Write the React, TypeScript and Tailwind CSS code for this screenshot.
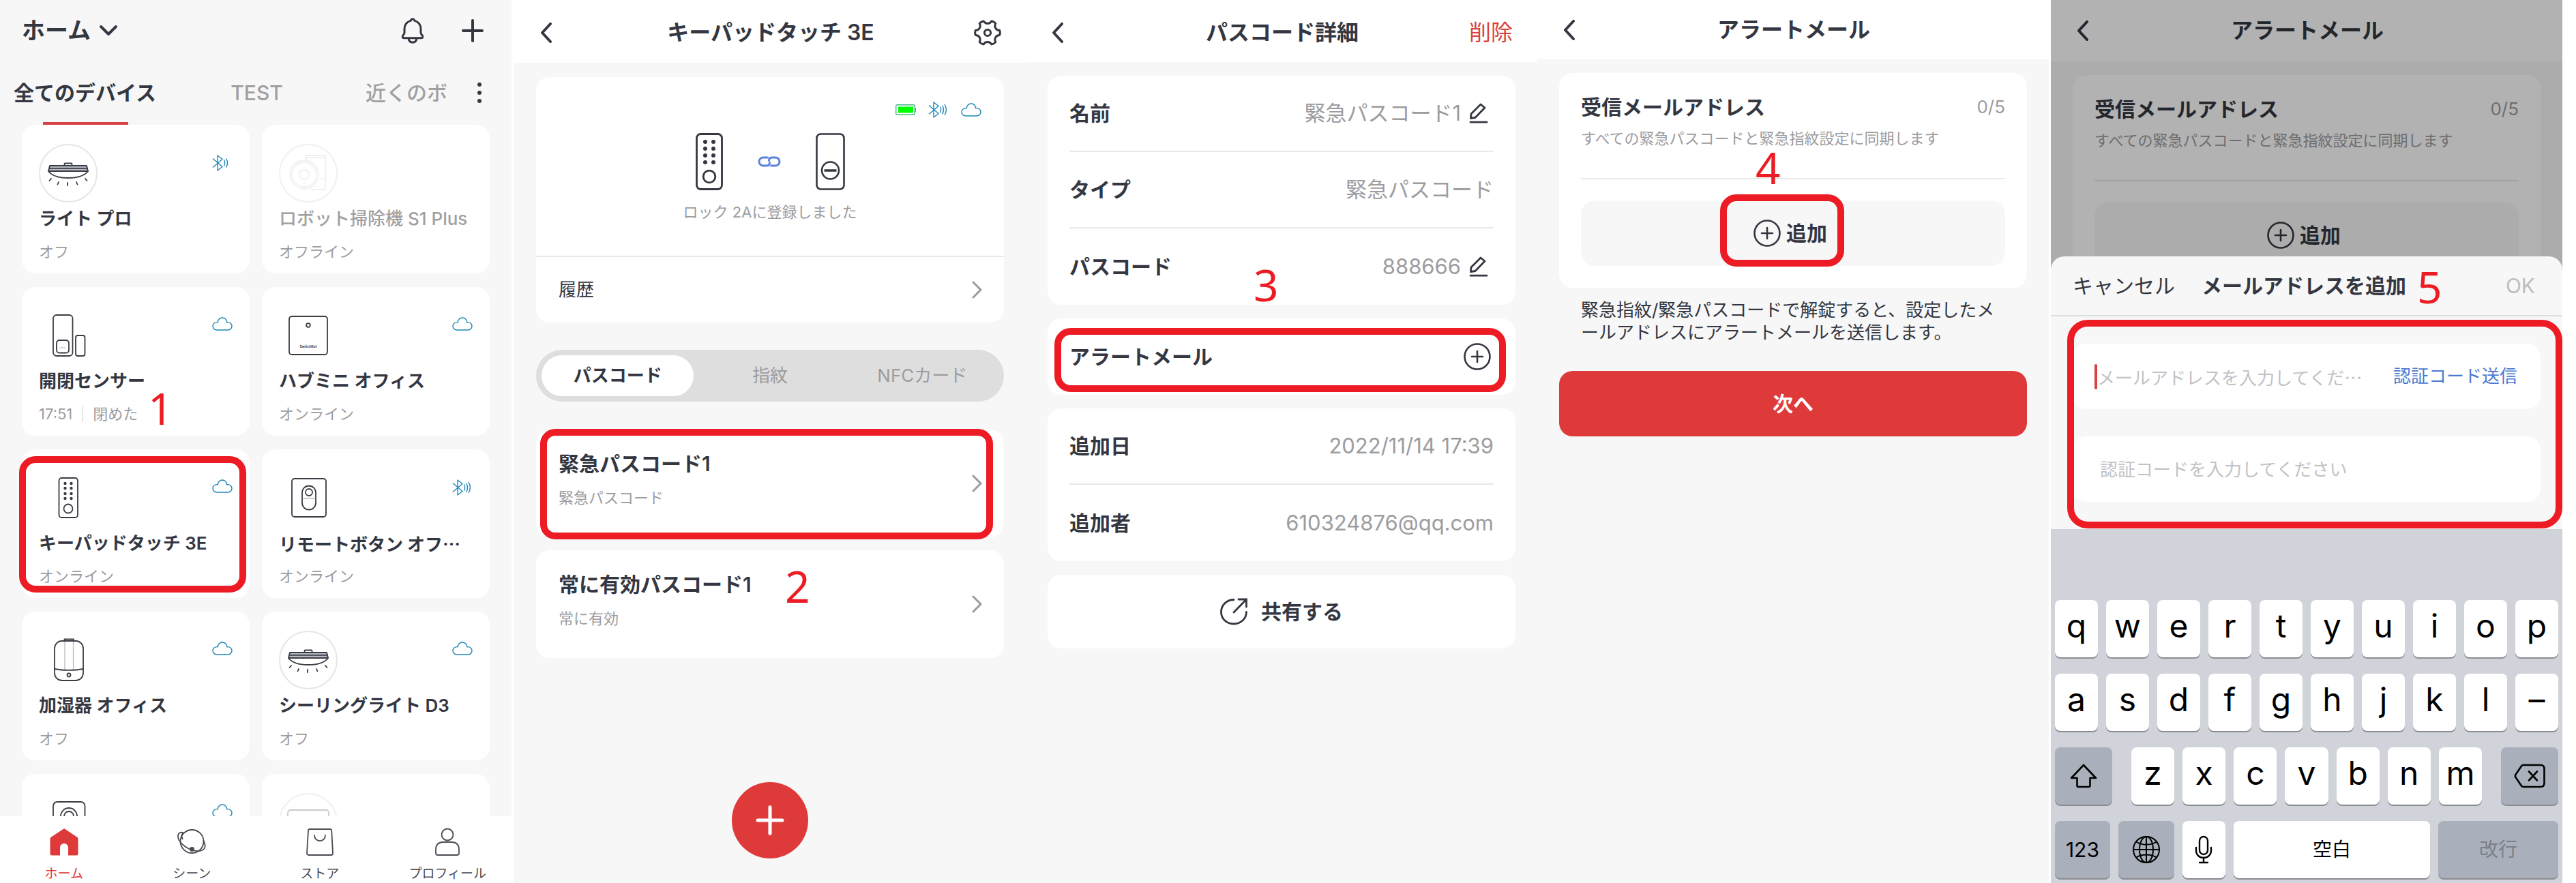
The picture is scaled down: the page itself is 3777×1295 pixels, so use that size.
import type { ReactNode } from "react"

type Signal = "bt" | "cloud" | "none"

interface Device {
  name: string
  status: string
  time?: string
  signal: Signal
  waves?: number
  icon: ReactNode
  offline?: boolean
  marked?: boolean
}

const keyRows = ["qwertyuiop", "asdfghjkl–", "zxcvbnm"]

/* ---------- small icons ---------- */

const BackIcon = () => (
  <svg viewBox="0 0 18 30" className="w-[18px] h-[30px]" fill="none" stroke="currentColor" strokeWidth="4" strokeLinecap="round" strokeLinejoin="round">
    <path d="M15 2 L3 15 L15 28" />
  </svg>
)

const NextIcon = () => (
  <svg viewBox="0 0 16 28" className="w-4 h-7 shrink-0" fill="none" stroke="#9b9b9e" strokeWidth="3" strokeLinecap="round" strokeLinejoin="round">
    <path d="M3 3 L14 14 L3 25" />
  </svg>
)

const BellIcon = () => (
  <svg viewBox="0 0 34 38" className="w-[34px] h-[38px]" fill="none" stroke="currentColor" strokeWidth="3" strokeLinejoin="round">
    <path d="M17 2 C15.5 2 14.5 3 14.3 4.4 C8.8 5.6 5 10.2 5 16 V22 C5 24.6 2.2 25.4 2.2 27.8 C2.2 29.2 3 29.8 4.5 29.8 H29.5 C31 29.8 31.8 29.2 31.8 27.8 C31.8 25.4 29 24.6 29 22 V16 C29 10.2 25.2 5.6 19.7 4.4 C19.5 3 18.5 2 17 2 Z" />
    <path d="M11 30 C11.5 34 14 36.2 17 36.2 C20 36.2 22.5 34 23 30" />
  </svg>
)

const PlusIcon = ({ className }: { className: string }) => (
  <svg viewBox="0 0 34 36" className={className} fill="none" stroke="currentColor" strokeWidth="4" strokeLinecap="round">
    <path d="M3 18 H31 M17 3 V33" />
  </svg>
)

const AddCircleIcon = () => (
  <svg viewBox="0 0 40 40" className="w-10 h-10 shrink-0" fill="none" stroke="currentColor" strokeWidth="2.6" strokeLinecap="round">
    <circle cx="20" cy="20" r="18.5" />
    <path d="M12 20 H28 M20 12 V28" />
  </svg>
)

function gearPath() {
  const point = (r: number, deg: number) => {
    const a = (deg * Math.PI) / 180
    return `${(20 + r * Math.cos(a)).toFixed(2)} ${(20 + r * Math.sin(a)).toFixed(2)}`
  }
  let d = `M${point(18, -11)}`
  for (let t = 0; t < 360; t += 60) {
    d += ` Q${point(19, t)} ${point(18, t + 11)}`
    d += ` C${point(13, t + 16)} ${point(12.5, t + 44)} ${point(18, t + 49)}`
  }
  return d + " Z"
}

const GearIcon = () => (
  <svg viewBox="0 0 40 40" className="w-10 h-10" fill="none" stroke="currentColor" strokeWidth="3" strokeLinejoin="round">
    <path d={gearPath()} />
    <circle cx="20" cy="20" r="4.6" />
  </svg>
)

const CloudIcon = () => (
  <svg viewBox="0 0 30 20" className="w-[30px] h-5" fill="none" stroke="#1d86b8" strokeWidth="1.4">
    <path d="M7 19 H23 C26.5 19 29 16.5 29 13.3 C29 10 26.3 7.6 23 7.6 C22.6 7.6 22.2 7.6 21.8 7.7 C21.6 4 18.8 1 15 1 C11.2 1 8.4 4 8.2 7.7 C7.8 7.6 7.4 7.6 7 7.6 C3.7 7.6 1 10 1 13.3 C1 16.5 3.5 19 7 19 Z" />
  </svg>
)

const BluetoothIcon = ({ waves = 3 }: { waves?: number }) => (
  <svg viewBox="0 0 30 24" className="w-[30px] h-6" fill="none" stroke="#1d86b8" strokeWidth="1.4" strokeLinejoin="round">
    <path d="M1 5.5 L15 17.5 L8 23 V1 L15 6.5 L1 18.5" />
    <path d="M17.5 7.5 C19 10.5 19 13.5 17.5 16.5 M20.5 5.5 C23 9.5 23 14.5 20.5 18.5" />
    {waves > 2 && <path d="M24 4 C27 9 27 15 24 20" />}
  </svg>
)

const BatteryIcon = () => (
  <svg viewBox="0 0 30 16" className="w-[30px] h-4" fill="none">
    <rect x="0.7" y="0.7" width="27.6" height="14.6" rx="2" stroke="#3fb883" strokeWidth="1.4" />
    <rect x="4" y="3.5" width="22" height="9" fill="#00ff00" />
    <rect x="28.6" y="5" width="1.4" height="6" fill="#3fb883" />
  </svg>
)

const LinkIcon = () => (
  <svg viewBox="0 0 34 16" className="w-[34px] h-4" fill="none" stroke="#5a82dc" strokeWidth="3" strokeLinecap="round">
    <path d="M14.5 2 H8 A6 6 0 0 0 8 14 H13 C16 14 17.5 12 17.5 9.5" />
    <path d="M19.5 14 H26 A6 6 0 0 0 26 2 H21 C18 2 16.5 4 16.5 6.5" />
  </svg>
)

const EditIcon = () => (
  <svg viewBox="0 0 28 30" className="w-7 h-[30px]" fill="none" stroke="currentColor" strokeWidth="2.8" strokeLinecap="round" strokeLinejoin="round">
    <path d="M17 2 L23 7 L9 21.5 L2.5 22.5 L3 16 Z M2 28.2 H26" />
  </svg>
)

const ShareIcon = () => (
  <svg viewBox="0 0 40 40" className="w-10 h-10" fill="none" stroke="currentColor" strokeWidth="2.8" strokeLinecap="round">
    <path d="M20 2.5 C9.5 2.5 1.5 10.4 1.5 20.5 C1.5 30.5 9.5 38 20 38 C30 38 38.5 30.5 38.5 20.5" />
    <path d="M27 2 H38.5 V13 M38 2.5 L20 21" />
  </svg>
)

/* ---------- device drawings, all on an 86px square ---------- */

const Drawing = ({ children, faint }: { children: ReactNode; faint?: boolean }) => (
  <svg viewBox="0 0 86 86" className="w-[86px] h-[86px]" fill="none" stroke={faint ? "#f0f0f1" : "#3a3c44"} strokeWidth="1.8" strokeLinecap="round" strokeLinejoin="round">
    {children}
  </svg>
)

const LightIcon = () => (
  <Drawing>
    <circle cx="43" cy="43" r="42" stroke="#e6e6e8" strokeWidth="2" />
    <path d="M37.5 32 V29.5 Q37.5 28.5 38.5 28.5 H47.5 Q48.5 28.5 48.5 29.5 V32" />
    <path d="M16 32 H70 L72 40 H14 Z" fill="#b9bac4" />
    <path d="M15 35.8 H71" />
    <path d="M14 40 C19 47 31 50 43 50 C55 50 67 47 72 40" />
    <path d="M18 51 L15.5 54 M29 56 L27.5 59.5 M42 57 V61 M55 56 L56.5 59.5 M68 51 L70.5 54" />
  </Drawing>
)

const RobotIcon = () => (
  <Drawing faint>
    <circle cx="43" cy="43" r="42" strokeWidth="2" />
    <path d="M40 23 V17 H68 V67 H48 M42 20 H68 M62 51 H68" />
    <circle cx="37" cy="45" r="21" />
    <circle cx="37" cy="45" r="18" />
    <circle cx="37" cy="45" r="7" />
    <path d="M37 57 V58 M37 61 V62" />
  </Drawing>
)

const SensorIcon = () => (
  <Drawing>
    <rect x="21" y="13" width="28.5" height="60" rx="5" />
    <rect x="26" y="50" width="18" height="18.5" rx="4" />
    <path d="M31 61 H39" stroke="#aaabb0" strokeWidth="1" />
    <rect x="54" y="43" width="13.5" height="30" rx="3" />
  </Drawing>
)

const HubIcon = () => (
  <Drawing>
    <rect x="15" y="15" width="56" height="56" rx="4" />
    <circle cx="43" cy="28" r="2.8" />
    <text x="43" y="61" textAnchor="middle" fontSize="5" fontWeight="700" fill="#3a3c44" stroke="none">SwitchBot</text>
  </Drawing>
)

const KeypadDrawing = () => (
  <Drawing>
    <rect x="29.5" y="14" width="27.5" height="58" rx="4" />
    {[22, 29, 37, 44].map((y) => (
      <g key={y} fill="#3a3c44" stroke="none">
        <circle cx="38.5" cy={y} r="2.2" />
        <circle cx="47.5" cy={y} r="2.2" />
      </g>
    ))}
    <circle cx="43" cy="59" r="6.5" />
  </Drawing>
)

const RemoteIcon = () => (
  <Drawing>
    <rect x="19" y="15" width="50" height="56" rx="4" />
    <rect x="34" y="25.5" width="20" height="35" rx="10" />
    <circle cx="44" cy="35" r="5" />
    <path d="M35 44 H53" stroke="#b9bac0" strokeWidth="1.3" />
  </Drawing>
)

const HumidifierIcon = () => (
  <Drawing>
    <path d="M38 16 V57 M50.5 16 V57" stroke="#b9bac0" strokeWidth="1.3" />
    <rect x="23" y="15" width="42" height="58" rx="11" />
    <path d="M37.5 15 V12.5 H51 V15" />
    <path d="M23 56 C35 58.5 53 58.5 65 56" />
    <circle cx="44" cy="65" r="2.5" />
  </Drawing>
)

const MeterIcon = () => (
  <Drawing>
    <rect x="21" y="13" width="46.5" height="60" rx="6" />
    <circle cx="44" cy="34" r="12" />
    <circle cx="44" cy="34" r="7" />
  </Drawing>
)

const FaintIcon = () => (
  <Drawing faint>
    <circle cx="43" cy="43" r="42" strokeWidth="2" />
    <rect x="13" y="25" width="60" height="40" rx="4" stroke="#c9cacd" />
  </Drawing>
)

const devices: Device[] = [
  { name: "ライト プロ", status: "オフ", signal: "bt", waves: 2, icon: <LightIcon /> },
  { name: "ロボット掃除機 S1 Plus", status: "オフライン", signal: "none", icon: <RobotIcon />, offline: true },
  { name: "開閉センサー", status: "閉めた", time: "17:51", signal: "cloud", icon: <SensorIcon /> },
  { name: "ハブミニ オフィス", status: "オンライン", signal: "cloud", icon: <HubIcon /> },
  { name: "キーパッドタッチ 3E", status: "オンライン", signal: "cloud", icon: <KeypadDrawing />, marked: true },
  { name: "リモートボタン オフ…", status: "オンライン", signal: "bt", icon: <RemoteIcon /> },
  { name: "加湿器 オフィス", status: "オフ", signal: "cloud", icon: <HumidifierIcon /> },
  { name: "シーリングライト D3", status: "オフ", signal: "cloud", icon: <LightIcon /> },
  { name: "", status: "", signal: "cloud", icon: <MeterIcon /> },
  { name: "", status: "", signal: "none", icon: <FaintIcon /> },
]

/* ---------- shared pieces ---------- */

// red frame and step number drawn over a screen
const Frame = ({ className }: { className: string }) => (
  <div className={`absolute border-[10px] border-[#ed1c24] pointer-events-none ${className}`} />
)

const Step = ({ n, className }: { n: number; className: string }) => (
  <span className={`absolute font-['Noto_Sans'] text-[64px] leading-[48px] text-[#ed1c24] ${className}`}>{n}</span>
)

const Screen = ({ children, className = "" }: { children: ReactNode; className?: string }) => (
  <section className={`relative flex-1 min-w-0 flex flex-col overflow-hidden bg-[#f7f7f7] ${className}`}>{children}</section>
)

function TopBar({ title, action, className }: { title: string; action?: ReactNode; className: string }) {
  return (
    <header className={`grid grid-cols-[1fr_auto_1fr] items-center bg-white pl-[38px] pr-9 shrink-0 ${className}`}>
      <button aria-label="戻る" className="justify-self-start"><BackIcon /></button>
      <h1 className="text-[32px] leading-10 font-semibold">{title}</h1>
      <div className="justify-self-end flex">{action}</div>
    </header>
  )
}

const DeviceCard = ({ device }: { device: Device }) => (
  <article className="relative bg-white rounded-[20px] h-[218px] pl-[25px] pt-7">
    <div className="flex justify-between items-start pr-[25px]">
      {device.icon}
      <span className="w-[30px] pt-4">
        {device.signal === "bt" && <BluetoothIcon waves={device.waves} />}
        {device.signal === "cloud" && <CloudIcon />}
      </span>
    </div>
    <h2
      className={`mt-2 text-[26px] leading-8 whitespace-nowrap ${device.offline ? "font-medium text-[#a0a0a2]" : "font-semibold"} ${
        device.name.endsWith("…") ? "font-['Noto_Sans_CJK_JP',sans-serif]" : ""
      }`}
    >
      {device.name}
    </h2>
    <p className="mt-4 text-[22px] leading-8 text-[#9c9c9f] flex items-center">
      {device.time && <span className="pr-[14px] mr-[14px] border-r-2 border-[#e6e6e8] leading-6">{device.time}</span>}
      {device.status}
    </p>
    {device.marked && <Frame className="-left-1 top-[10px] right-[5px] bottom-2 rounded-3xl" />}
  </article>
)

/* ---------- screens ---------- */

function HomeScreen() {
  return (
    <Screen>
      <header className="flex items-center h-[89px] shrink-0 pl-8 pr-10">
        <button className="flex items-center gap-3 text-[34px] leading-10 font-semibold">
          ホーム
          <svg viewBox="0 0 28 18" className="w-7 h-[18px]" fill="none" stroke="currentColor" strokeWidth="4" strokeLinecap="round" strokeLinejoin="round">
            <path d="M3 3 L14 14 L25 3" />
          </svg>
        </button>
        <button aria-label="通知" className="ml-auto"><BellIcon /></button>
        <button aria-label="追加" className="ml-[54px]"><PlusIcon className="w-[34px] h-9" /></button>
      </header>

      <nav className="flex items-center h-[94px] shrink-0 pl-5 pr-11 text-[30px] leading-10 text-[#a0a0a2]">
        <button className="relative h-full font-semibold text-[#343741]">
          全てのデバイス
          <span className="absolute left-[43px] bottom-0 w-[125px] h-1 bg-[#d94043]" />
        </button>
        <button className="mx-auto pr-3 font-medium">TEST</button>
        <button className="mr-11 font-medium">近くのボ</button>
        <button aria-label="メニュー" className="flex flex-col gap-[6px]">
          <i className="size-[6px] rounded-full bg-[#343741]" />
          <i className="size-[6px] rounded-full bg-[#343741]" />
          <i className="size-[6px] rounded-full bg-[#343741]" />
        </button>
      </nav>

      <main className="flex-1 min-h-0 overflow-hidden">
        <div className="grid grid-cols-2 gap-x-[18px] gap-y-5 px-8">
          {devices.map((d, i) => <DeviceCard key={i} device={d} />)}
        </div>
      </main>

      <nav className="grid grid-cols-4 h-[98px] shrink-0 bg-white text-[19px] leading-6 pt-[17px]">
        <a href="#home" className="flex flex-col items-center gap-[14px] text-[#df3a3a]">
          <svg viewBox="0 0 42 42" className="size-[42px]" fill="currentColor">
            <path d="M21 1 L40.5 14 Q41.5 15 41.5 16.5 V38 Q41.5 40.5 39 40.5 H27 V29 A6 6 0 0 0 15 29 V40.5 H3 Q0.5 40.5 0.5 38 V16.5 Q0.5 15 1.5 14 Z" />
          </svg>
          ホーム
        </a>
        <a href="#scene" className="flex flex-col items-center gap-[14px] text-[#4a4c54]">
          <svg viewBox="0 0 42 42" className="size-[42px]" fill="none" stroke="currentColor" strokeWidth="1.8">
            <circle cx="21.5" cy="20" r="17" />
            <path d="M9 7 C1 5 -1 12 3 19 C9 28 22 35 32 34 C41 33 43 27 38 18" />
            <path d="M9 7 C6 9 6 13 8 17" />
            <circle cx="21.5" cy="31.5" r="2.5" fill="currentColor" />
          </svg>
          シーン
        </a>
        <a href="#store" className="flex flex-col items-center gap-[14px] text-[#4a4c54]">
          <svg viewBox="0 0 42 42" className="size-[42px]" fill="none" stroke="currentColor" strokeWidth="1.8" strokeLinejoin="round" strokeLinecap="round">
            <path d="M6 2 H36 Q38 2 38.2 4 L40 37 Q40 40 37.5 40 H4.5 Q2 40 2 37 L4 4 Q4.2 2 6 2 Z" />
            <path d="M13 11 C13 22 29 22 29 11" />
          </svg>
          ストア
        </a>
        <a href="#profile" className="flex flex-col items-center gap-[14px] text-[#4a4c54]">
          <svg viewBox="0 0 42 42" className="size-[42px]" fill="none" stroke="currentColor" strokeWidth="1.8" strokeLinejoin="round">
            <circle cx="21" cy="10" r="8.5" />
            <path d="M4 37 V32 C4 25 8 21 15 21 H27 C34 21 38 25 38 32 V37 Q38 40 35 40 H7 Q4 40 4 37 Z" />
          </svg>
          プロフィール
        </a>
      </nav>

      <Step n={1} className="left-[217px] top-[575px]" />
    </Screen>
  )
}

const PasscodeItem = ({ title, kind, children }: { title: string; kind: string; children?: ReactNode }) => (
  <article className="relative flex items-center justify-between bg-white rounded-[20px] h-[158px] pl-[33px] pr-8">
    <div className="pb-3">
      <h2 className="text-[30px] leading-10 font-semibold">{title}</h2>
      <p className="mt-[14px] text-[22px] leading-8 text-[#9c9c9f]">{kind}</p>
    </div>
    <NextIcon />
    {children}
  </article>
)

function KeypadScreen() {
  return (
    <Screen className="ml-1">
      <TopBar title="キーパッドタッチ 3E" className="h-[92px] pt-1" action={<button aria-label="設定"><GearIcon /></button>} />
      <main className="flex-1 px-8 pt-[21px]">
        <div className="bg-white rounded-[20px]">
          <div className="h-[264px] border-b-2 border-[#e9e9ea] pt-9">
            <div className="flex justify-end items-center gap-[18px] pr-[33px] h-6">
              <BatteryIcon />
              <BluetoothIcon />
              <CloudIcon />
            </div>
            <div className="flex justify-center items-center mt-[22px]">
              <svg viewBox="0 0 40 84" className="w-10 h-[84px]" fill="none" stroke="currentColor" strokeWidth="2.8">
                <rect x="1.5" y="1.5" width="37" height="81" rx="6" />
                {[13, 23, 33, 43].map((y) => (
                  <g key={y} fill="currentColor" stroke="none">
                    <circle cx="14" cy={y} r="3" />
                    <circle cx="26" cy={y} r="3" />
                  </g>
                ))}
                <circle cx="20" cy="64" r="8.8" />
              </svg>
              <span className="mx-[51px]"><LinkIcon /></span>
              <svg viewBox="0 0 43 84" className="w-[43px] h-[84px]" fill="none" stroke="currentColor" strokeWidth="2.6">
                <rect x="1.5" y="1.5" width="40" height="81" rx="6" />
                <circle cx="21.5" cy="55" r="12.5" />
                <path d="M12.5 55 H30.5" strokeWidth="3.5" />
              </svg>
            </div>
            <p className="mt-4 text-center text-[22px] leading-8 text-[#9c9c9f]">ロック 2Aに登録しました</p>
          </div>
          <button className="flex w-full items-center justify-between h-24 pl-[33px] pr-8 text-[26px] leading-8">
            履歴
            <NextIcon />
          </button>
        </div>

        <div className="grid grid-cols-3 mt-10 p-2 h-[76px] rounded-full bg-[#dedede] text-[26px] leading-8 text-[#9c9c9f]">
          <button className="rounded-full bg-white text-[#343741] font-semibold">パスコード</button>
          <button>指紋</button>
          <button>NFCカード</button>
        </div>

        <div className="mt-[41px] flex flex-col gap-[19px]">
          <PasscodeItem title="緊急パスコード1" kind="緊急パスコード">
            <Frame className="left-[6px] right-4 -top-px -bottom-[3px] rounded-[22px]" />
          </PasscodeItem>
          <PasscodeItem title="常に有効パスコード1" kind="常に有効" />
        </div>
      </main>

      <div className="absolute inset-x-0 bottom-9 flex justify-center">
        <button aria-label="追加" className="flex size-28 items-center justify-center rounded-full bg-[#df3a3a] text-white">
          <PlusIcon className="w-[44px] h-[46px]" />
        </button>
      </div>
      <Step n={2} className="left-[397px] top-[836px]" />
    </Screen>
  )
}

const DetailRow = ({ label, value, edit }: { label: string; value: string; edit?: boolean }) => (
  <div className="flex items-center justify-between h-28 text-[30px] leading-10 border-b-2 border-[#e9e9ea] last:border-0">
    <dt className="font-semibold">{label}</dt>
    <dd className="flex items-center text-[31px] text-[#9c9c9f]">
      {value}
      {edit && <button aria-label={`${label}を編集`} className="ml-3 mr-2 text-[#343741]"><EditIcon /></button>}
    </dd>
  </div>
)

function DetailScreen() {
  return (
    <Screen>
      <TopBar title="パスコード詳細" className="h-[91px] pt-1" action={<button className="text-[32px] leading-10 text-[#d9413f]">削除</button>} />
      <main className="flex flex-col gap-5 px-8 pt-5">
        <dl className="bg-white rounded-[20px] px-8">
          <DetailRow label="名前" value="緊急パスコード1" edit />
          <DetailRow label="タイプ" value="緊急パスコード" />
          <DetailRow label="パスコード" value="888666" edit />
        </dl>
        <button className="relative flex items-center justify-between h-28 bg-white rounded-[20px] pl-8 pr-9 text-[30px] leading-10 font-semibold">
          アラートメール
          <AddCircleIcon />
          <Frame className="left-[10px] right-[14px] top-[14px] bottom-1 rounded-3xl" />
        </button>
        <dl className="bg-white rounded-[20px] px-8">
          <DetailRow label="追加日" value="2022/11/14 17:39" />
          <DetailRow label="追加者" value="610324876@qq.com" />
        </dl>
        <button className="flex items-center justify-center gap-5 h-[108px] bg-white rounded-[20px] text-[30px] leading-10 font-semibold">
          <ShareIcon />
          共有する
        </button>
      </main>
      <Step n={3} className="left-[334px] top-[394px]" />
    </Screen>
  )
}

const MailCard = ({ children }: { children?: ReactNode }) => (
  <div className="bg-white rounded-[20px] px-8 pt-[30px] pb-8">
    <div className="flex justify-between items-center">
      <h2 className="text-[30px] leading-10 font-semibold">受信メールアドレス</h2>
      <span className="text-[26px] leading-8 text-[#9c9c9f]">0/5</span>
    </div>
    <p className="mt-[10px] pb-[42px] border-b-2 border-[#e9e9ea] text-[22px] leading-8 text-[#9c9c9f]">すべての緊急パスコードと緊急指紋設定に同期します</p>
    <button className="relative flex w-full items-center justify-center gap-2 h-24 mt-[31px] pr-2 bg-[#f7f7f7] rounded-[20px] text-[30px] leading-10 font-semibold">
      <AddCircleIcon />
      追加
      {children}
    </button>
  </div>
)

function MailScreen() {
  return (
    <Screen>
      <TopBar title="アラートメール" className="h-[87px]" />
      <main className="px-8 pt-5">
        <MailCard>
          <Frame className="left-1/2 -ml-[107px] w-[182px] -top-[9px] h-[106px] rounded-3xl" />
        </MailCard>
        <p className="mt-4 px-8 text-[26px] leading-[33px] whitespace-nowrap">
          緊急指紋/緊急パスコードで解錠すると、設定したメ
          <br />
          ールアドレスにアラートメールを送信します。
        </p>
        <button className="w-full h-24 mt-10 rounded-[20px] bg-[#df3a3a] text-white text-[30px] leading-10 font-semibold">次へ</button>
      </main>
      <Step n={4} className="left-[320px] top-[222px]" />
    </Screen>
  )
}

const Key = ({ children, className = "bg-white flex-1", label }: { children: ReactNode; className?: string; label?: string }) => (
  <button aria-label={label} className={`flex items-center justify-center min-w-0 h-[84px] rounded-lg shadow-[0_2px_0_#8a8c91] ${className}`}>
    {children}
  </button>
)

const letters = (row: string) =>
  row.split("").map((c) => (
    <Key key={c}>
      <span className="pb-2 text-[48px] leading-[56px]">{c}</span>
    </Key>
  ))

function Keyboard() {
  return (
    <div className="flex flex-1 flex-col gap-6 bg-[#d0d3d9] px-[6px] pt-[104px] text-black">
      <div className="flex gap-3">{letters(keyRows[0])}</div>
      <div className="flex gap-3">{letters(keyRows[1])}</div>
      <div className="flex justify-between">
        <Key label="シフト" className="bg-[#a9b0bb] w-[84px]">
          <svg viewBox="0 0 40 36" className="w-10 h-9" fill="none" stroke="currentColor" strokeWidth="2.6" strokeLinejoin="round">
            <path d="M20 2 L38 21 H29.5 V32 Q29.5 34 27.5 34 H12.5 Q10.5 34 10.5 32 V21 H2 Z" />
          </svg>
        </Key>
        <div className="flex gap-3 w-[514px]">{letters(keyRows[2])}</div>
        <Key label="削除" className="bg-[#a9b0bb] w-[84px]">
          <svg viewBox="0 0 46 36" className="w-[46px] h-9" fill="none" stroke="currentColor" strokeWidth="2.6" strokeLinejoin="round" strokeLinecap="round">
            <path d="M14 2 H39 Q44.5 2 44.5 7.5 V28.5 Q44.5 34 39 34 H14 Q12 34 11 32.5 L2.5 20 Q1 18 2.5 16 L11 3.5 Q12 2 14 2 Z" />
            <path d="M22 11.5 L34 24.5 M34 11.5 L22 24.5" />
          </svg>
        </Key>
      </div>
      <div className="flex gap-3 text-[28px] leading-8">
        <Key className="bg-[#a9b0bb] flex-[81] text-[30px]">123</Key>
        <Key label="言語" className="bg-[#a9b0bb] flex-[82]">
          <svg viewBox="0 0 42 42" className="size-[42px]" fill="none" stroke="currentColor" strokeWidth="2">
            <circle cx="21" cy="21" r="19" />
            <ellipse cx="21" cy="21" rx="10" ry="19" />
            <path d="M21 2 V40 M2 21 H40 M6 9.5 C14 15 28 15 36 9.5 M6 32.5 C14 27 28 27 36 32.5" />
          </svg>
        </Key>
        <Key label="音声入力" className="bg-white flex-[63]">
          <svg viewBox="0 0 26 42" className="w-[26px] h-[42px]" fill="none" stroke="currentColor" strokeWidth="2.4" strokeLinecap="round">
            <rect x="7" y="2" width="12" height="26" rx="6" />
            <path d="M2 18 V22 C2 29 7 33 13 33 C19 33 24 29 24 22 V18 M13 33 V40 M7 40 H19" />
          </svg>
        </Key>
        <Key className="bg-white flex-[289]">空白</Key>
        <Key className="bg-[#a9b0bb] flex-[176] text-[#7b7f87]">改行</Key>
      </div>
    </div>
  )
}

function AddMailScreen() {
  return (
    <Screen className="ml-[3px]">
      <TopBar title="アラートメール" className="h-[90px]" />
      <main className="px-8 pt-5">
        <MailCard />
      </main>
      <div className="absolute inset-0 flex flex-col bg-black/30 pt-[376px]">
        <form className="flex flex-col h-[400px] shrink-0 rounded-t-[20px] bg-[#f7f7f7]">
          <div className="grid grid-cols-[1fr_auto_1fr] items-center h-[88px] shrink-0 pl-8 pr-10 border-b-2 border-[#dddee0] text-[30px] leading-10">
            <button type="button" className="justify-self-start">キャンセル</button>
            <h2 className="font-semibold">メールアドレスを追加</h2>
            <button type="button" className="justify-self-end text-[#bdbdc0]">OK</button>
          </div>
          <div className="relative flex flex-1 flex-col gap-10 px-8 pt-10">
            <div className="flex items-center h-24 bg-white rounded-[20px] pl-8 pr-[34px] text-[26px] leading-8">
              <span className="w-1 h-[37px] rounded-full bg-[#d9433f]" />
              <input
                type="email"
                aria-label="メールアドレス"
                placeholder="メールアドレスを入力してください"
                className="flex-1 min-w-0 h-10 mr-[42px] font-['Noto_Sans_CJK_JP',sans-serif] text-ellipsis outline-none placeholder:text-[#c2c2c5]"
              />
              <button type="button" className="text-[#4a7ad2]">認証コード送信</button>
            </div>
            <input
              type="text"
              aria-label="認証コード"
              placeholder="認証コードを入力してください"
              className="h-24 bg-white rounded-[20px] px-10 text-[26px] leading-8 outline-none placeholder:text-[#c2c2c5]"
            />
            <Frame className="left-6 right-0 top-[5px] bottom-px rounded-[30px]" />
          </div>
        </form>
        <Keyboard />
      </div>
      <Step n={5} className="left-[537px] top-[397px]" />
    </Screen>
  )
}

export default function App() {
  return (
    <div lang="ja" className="flex h-screen bg-white pr-5 font-['Inter','Noto_Sans_CJK_JP',sans-serif] text-[#343741]">
      <HomeScreen />
      <KeypadScreen />
      <DetailScreen />
      <MailScreen />
      <AddMailScreen />
    </div>
  )
}
